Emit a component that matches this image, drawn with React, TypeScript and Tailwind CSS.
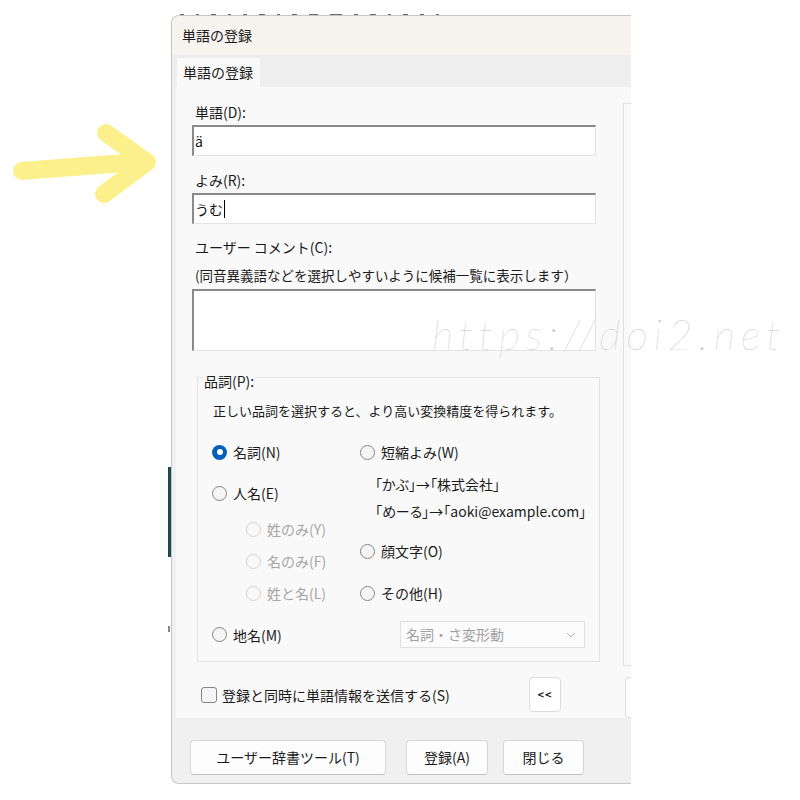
import React from "react";

const font = "font-['Noto_Sans_CJK_JP','Noto_Sans',sans-serif]";

function Radio({
  label,
  checked = false,
  disabled = false,
  className = "",
}: {
  label: string;
  checked?: boolean;
  disabled?: boolean;
  className?: string;
}) {
  return (
    <div className={`flex h-5 items-center gap-[6px] ${className}`}>
      {checked ? (
        <span className="flex h-[15px] w-[15px] items-center justify-center rounded-full bg-[#005fb8]">
          <span className="h-[6px] w-[6px] rounded-full bg-white" />
        </span>
      ) : (
        <span
          className={`h-[15px] w-[15px] rounded-full border ${
            disabled ? "border-[#d0d0d0] bg-[#fafafa]" : "border-[#858585] bg-[#f5f5f5]"
          }`}
        />
      )}
      <span className={`text-[14px] leading-5 ${disabled ? "text-[#a6a6a6]" : "text-[#1b1b1b]"}`}>
        {label}
      </span>
    </div>
  );
}

function Field({ children, h = "h-[31px]" }: { children?: React.ReactNode; h?: string }) {
  return (
    <div
      className={`${h} flex w-[404px] items-start border-t-2 border-l-2 border-r border-b border-t-[#8a8a8a] border-l-[#8a8a8a] border-r-[#e4e4e4] border-b-[#e4e4e4] bg-white pl-[1px] pt-[4px] text-[14px] leading-5 text-[#111]`}
    >
      {children}
    </div>
  );
}

function WinButton({ label, w }: { label: string; w: string }) {
  return (
    <div
      className={`${w} flex h-[35px] items-center justify-center rounded-[4px] border border-[#d6d6d6] border-b-[#c2c2c2] bg-[#fdfdfd] text-[14px] text-[#1b1b1b]`}
    >
      {label}
    </div>
  );
}

// bottoms of the letters of the page behind, peeking over the dialog
const peek = [4, 3, 5, 3, 4, 6, 3, 5, 9, 12, 4, 6, 3, 5, 4, 3];

export default function App() {
  return (
    <div className={`relative h-[800px] w-[800px] overflow-hidden bg-white ${font}`}>
      <div className="absolute left-[180px] top-[14px] flex h-[1px] w-[270px] items-start gap-[12px]">
        {peek.map((w, i) => (
          <span key={i} className="h-[1px] bg-[#6a6a6a]" style={{ width: w }} />
        ))}
      </div>
      <div className="absolute left-[168px] top-[467px] h-[90px] w-[3px] bg-[#1e4756]" />
      <div className="absolute left-[168px] top-[626px] h-[6px] w-[2px] bg-[#888]" />

      <div className="pl-[171px] pt-[15px]">
        <div className="flex h-[769px] w-[460px] flex-col overflow-hidden rounded-l-[8px] border border-r-0 border-[#c6c6c6] bg-[#f0f0f0]">
          {/* title bar */}
          <div className="flex h-[39px] items-center bg-[#f7f3ee] pl-[10px] text-[14px] text-[#1b1b1b]">
            単語の登録
          </div>

          {/* tab strip */}
          <div className="flex h-[32px] bg-[#eeeeee]">
            <div className="ml-[5px] mt-[3px] flex h-[29px] w-[83px] items-center bg-[#f9f9f9] pl-[6px] text-[14px] text-[#1b1b1b]">
              単語の登録
            </div>
          </div>

          {/* panel */}
          <div className="ml-[4px] flex h-[631px] bg-[#f9f9f9] pl-[16px]">
            <div className="flex w-[408px] shrink-0 flex-col pt-[15px] text-[#1b1b1b]">
              <div className="pl-[3px] text-[14px] leading-5">単語(D):</div>
              <div className="mt-[3px]">
                <Field>ä</Field>
              </div>
              <div className="mt-[14px] pl-[3px] text-[14px] leading-5">よみ(R):</div>
              <div className="mt-[3px]">
                <Field>
                  うむ<span className="ml-[1px] mt-[1px] h-[18px] w-[1px] bg-black" />
                </Field>
              </div>
              <div className="mt-[13px] pl-[3px] text-[14px] leading-5">ユーザー コメント(C):</div>
              <div className="mt-[8px] whitespace-nowrap pl-[3px] text-[13.5px] leading-5">
                (同音異義語などを選択しやすいように候補一覧に表示します）
              </div>
              <div className="mt-[4px]">
                <Field h="h-[62px]" />
              </div>

              {/* 品詞 group */}
              <div className="relative ml-[5px] mt-[26px] h-[285px] w-[403px] border border-[#e2e2e2] pl-[14px]">
                <div className="absolute -top-[7px] left-[5px] bg-[#f9f9f9] px-[1px] text-[14px] leading-5">
                  品詞(P):
                </div>
                <div className="mt-[23px] pl-[1px] text-[13px] leading-5">
                  正しい品詞を選択すると、より高い変換精度を得られます。
                </div>
                <div className="mt-[21px] flex">
                  <div className="flex w-[148px] shrink-0 flex-col">
                    <Radio label="名詞(N)" checked />
                    <Radio label="人名(E)" className="mt-[21px]" />
                    <Radio label="姓のみ(Y)" disabled className="ml-[34px] mt-[16px]" />
                    <Radio label="名のみ(F)" disabled className="ml-[34px] mt-[12px]" />
                    <Radio label="姓と名(L)" disabled className="ml-[34px] mt-[12px]" />
                  </div>
                  <div className="flex flex-col">
                    <Radio label="短縮よみ(W)" />
                    <div className="ml-[15px] mt-[12px] whitespace-nowrap text-[14px] leading-5 [font-feature-settings:'palt']">
                      「かぶ」→「株式会社」
                    </div>
                    <div className="ml-[15px] mt-[7px] whitespace-nowrap text-[14px] leading-5 [font-feature-settings:'palt']">
                      「めーる」→「aoki@example.com」
                    </div>
                    <Radio label="顔文字(O)" className="mt-[20px]" />
                    <Radio label="その他(H)" className="mt-[22px]" />
                  </div>
                </div>
                <div className="mt-[18px] flex h-[27px] items-center">
                  <Radio label="地名(M)" className="w-[188px] shrink-0" />
                  <div className="flex h-[27px] w-[185px] items-center justify-between border border-[#e0e0e0] bg-[#fbfbfb] pl-[5px] pr-[8px] text-[14px] text-[#a0a0a0]">
                    名詞・さ変形動
                    <svg width="10" height="6" viewBox="0 0 10 6" fill="none">
                      <path d="M1 1l4 4 4-4" stroke="#b0b0b0" strokeWidth="1" />
                    </svg>
                  </div>
                </div>
              </div>

              <div className="mt-[15px] flex h-[35px] items-center">
                <span className="ml-[9px] h-[16px] w-[16px] rounded-[3px] border border-[#858585] bg-[#f5f5f5]" />
                <span className="ml-[5px] text-[14px] leading-5">登録と同時に単語情報を送信する(S)</span>
                <div className="ml-auto mr-[39px] flex h-[35px] w-[32px] items-center justify-center rounded-[4px] border border-[#dcdcdc] bg-white text-[11px] font-bold tracking-[1px] text-[#1b1b1b]">
                  &lt;&lt;
                </div>
              </div>
            </div>

            {/* right column, cut off */}
            <div className="ml-[23px] flex flex-1 flex-col">
              <div className="mt-[16px] h-[563px] border border-r-0 border-[#e0e0e0]" />
              <div className="ml-[2px] mt-[11px] h-[35px] flex-1 rounded-l-[4px] border border-r-0 border-[#dcdcdc] bg-white" />
            </div>
          </div>

          {/* bottom buttons */}
          <div className="flex pl-[18px] pt-[22px]">
            <WinButton label="ユーザー辞書ツール(T)" w="w-[196px]" />
            <div className="ml-[20px]">
              <WinButton label="登録(A)" w="w-[82px]" />
            </div>
            <div className="ml-[15px]">
              <WinButton label="閉じる" w="w-[81px]" />
            </div>
          </div>
        </div>
      </div>

      {/* highlighter arrow */}
      <svg className="absolute left-0 top-[110px]" width="175" height="100" viewBox="0 0 175 100" fill="none">
        <g stroke="#fcef80" strokeWidth="18" strokeLinecap="round" strokeLinejoin="round" opacity="0.9">
          <path d="M22 61 C60 58 95 55 128 53" />
          <path d="M106 23 L147 52 L104 84" />
        </g>
      </svg>

      {/* watermark */}
      <div className="absolute left-[432px] top-[303px] whitespace-nowrap font-['Lato',sans-serif] text-[42px] font-thin italic tracking-[6px] text-[#c4c4c4]">
        https://doi2.net
      </div>
    </div>
  );
}
